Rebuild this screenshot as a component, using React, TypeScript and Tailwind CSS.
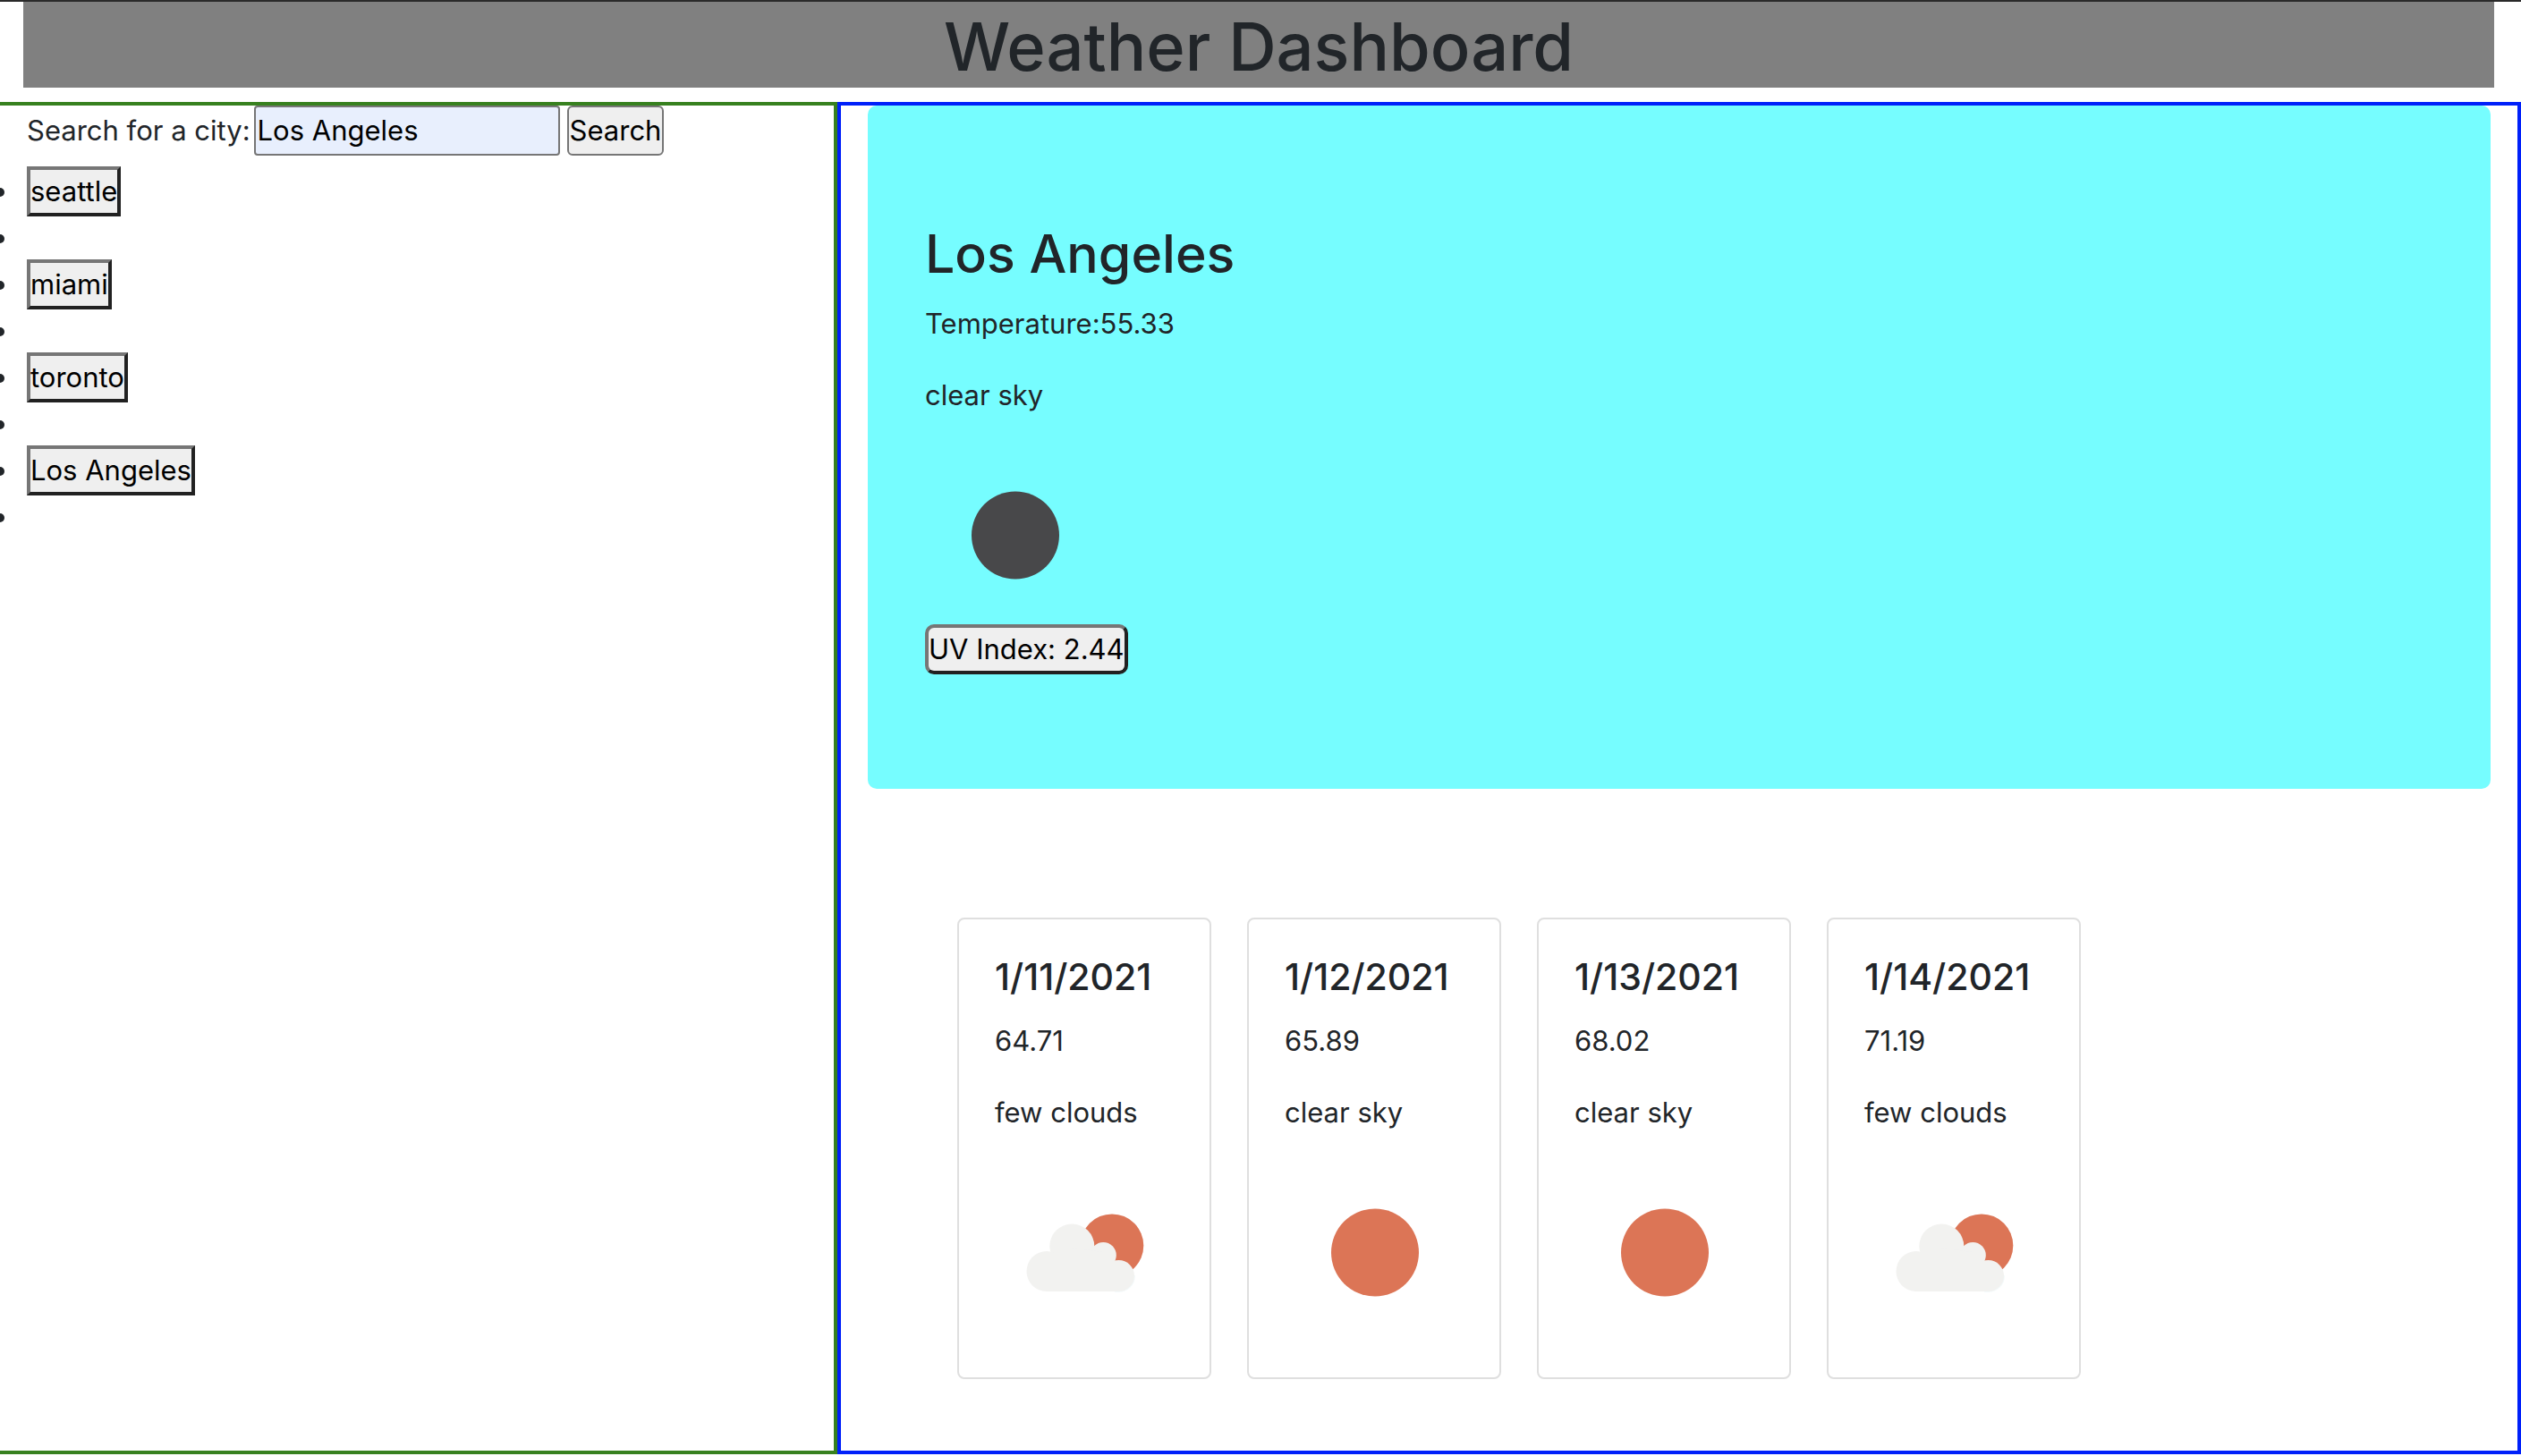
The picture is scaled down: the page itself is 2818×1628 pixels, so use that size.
import { Fragment, useState } from "react";

type IconName = "clear-night" | "clear-day" | "few-clouds";

const cities = ["seattle", "miami", "toronto", "Los Angeles"];

const forecast: { date: string; temp: string; sky: string; icon: IconName }[] = [
  { date: "1/11/2021", temp: "64.71", sky: "few clouds", icon: "few-clouds" },
  { date: "1/12/2021", temp: "65.89", sky: "clear sky", icon: "clear-day" },
  { date: "1/13/2021", temp: "68.02", sky: "clear sky", icon: "clear-day" },
  { date: "1/14/2021", temp: "71.19", sky: "few clouds", icon: "few-clouds" },
];

function CloudShape() {
  return (
    <>
      <circle cx="86.3" cy="93.5" r="25" />
      <circle cx="58" cy="121.5" r="22.5" />
      <circle cx="121.3" cy="103.5" r="14.5" />
      <circle cx="138.5" cy="126.5" r="17.5" />
      <path d="M58 144 V110 L86 95 L121 100 L138 120 V144 Z" />
    </>
  );
}

function WeatherIcon({ name }: { name: IconName }) {
  return (
    <svg viewBox="0 0 200 200" className="block size-[200px]" aria-hidden="true">
      {name === "few-clouds" ? (
        <>
          <circle cx="131" cy="92.7" r="35.3" fill="#dc7556" />
          <g fill="#f4fafb" stroke="#f4fafb" strokeWidth="2" clipPath="circle(35.3px at 131px 92.7px)">
            <CloudShape />
          </g>
          <g fill="#f2f2f0">
            <CloudShape />
          </g>
        </>
      ) : (
        <circle cx="101" cy="100.5" r="49" fill={name === "clear-night" ? "#48484a" : "#dc7556"} />
      )}
    </svg>
  );
}

export default function App() {
  const [query, setQuery] = useState("Los Angeles");

  return (
    <div className="border-t-2 border-[#2a2a2a] bg-white font-[Inter,sans-serif] text-[31px] leading-[48px] text-[#212529]">
      <header className="mr-[30px] mb-4 ml-[26px] bg-[#808080] pt-1">
        <h1 className="text-center text-[74px] leading-[92px] font-medium">Weather Dashboard</h1>
      </header>

      <main className="grid grid-cols-[936fr_1882fr]">
        <aside className="border-y-4 border-r-4 border-[#37811f] pl-[30px]">
          <form className="flex items-center" onSubmit={(e) => e.preventDefault()}>
            <label htmlFor="city" className="mr-1">
              Search for a city:
            </label>
            <input
              id="city"
              type="text"
              value={query}
              onChange={(e) => setQuery(e.target.value)}
              className="mr-2 w-[342px] rounded border-2 border-[#767676] bg-[#e8effd] px-0.5 py-0.5 text-black"
            />
            <button type="submit" className="rounded-md border-2 border-[#767676] bg-[#efefef] px-px py-0.5 text-black">
              Search
            </button>
          </form>
          <ul className="mt-3 -ml-2 list-disc">
            {cities.map((city) => (
              <Fragment key={city}>
                <li className="pl-2">
                  <button
                    type="button"
                    className="border-4 border-t-[#767676] border-r-[#212121] border-b-[#212121] border-l-[#767676] bg-[#efefef] text-black"
                  >
                    {city}
                  </button>
                </li>
                <li className="h-12 pl-2" />
              </Fragment>
            ))}
          </ul>
        </aside>

        <section className="border-4 border-[#0020fa] px-[30px] pb-20">
          <div className="rounded-[10px] bg-[#76fdff] px-16 py-32">
            <h2 className="mb-4 text-[59px] leading-[76px] font-medium">Los Angeles</h2>
            <p className="mb-8">Temperature:55.33</p>
            <p className="mb-8">clear sky</p>
            <WeatherIcon name="clear-night" />
            <button
              type="button"
              className="block rounded-[10px] border-4 border-t-[#767676] border-r-[#212121] border-b-[#212121] border-l-[#767676] bg-[#efefef] text-black"
            >
              UV Index: 2.44
            </button>
          </div>

          <div className="mt-36 ml-[100px] flex gap-10">
            {forecast.map((day) => (
              <article key={day.date} className="w-[284px] rounded-lg border-2 border-[#dfdfdf] p-10">
                <h3 className="mb-6 text-[41px] leading-[48px] font-medium">{day.date}</h3>
                <p className="mb-8">{day.temp}</p>
                <p className="mb-8">{day.sky}</p>
                <WeatherIcon name={day.icon} />
              </article>
            ))}
          </div>
        </section>
      </main>
    </div>
  );
}
